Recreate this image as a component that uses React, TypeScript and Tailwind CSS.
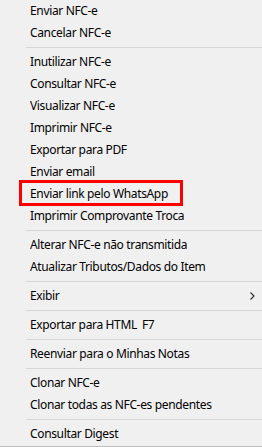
type Entry =
  | { kind: 'item'; label: string; shortcut?: string; submenu?: boolean; marked?: boolean }
  | { kind: 'sep' };

const entries: Entry[] = [
  { kind: 'item', label: 'Enviar NFC-e' },
  { kind: 'item', label: 'Cancelar NFC-e' },
  { kind: 'sep' },
  { kind: 'item', label: 'Inutilizar NFC-e' },
  { kind: 'item', label: 'Consultar NFC-e' },
  { kind: 'item', label: 'Visualizar NFC-e' },
  { kind: 'item', label: 'Imprimir NFC-e' },
  { kind: 'item', label: 'Exportar para PDF' },
  { kind: 'item', label: 'Enviar email' },
  { kind: 'item', label: 'Enviar link pelo WhatsApp', marked: true },
  { kind: 'item', label: 'Imprimir Comprovante Troca' },
  { kind: 'sep' },
  { kind: 'item', label: 'Alterar NFC-e não transmitida' },
  { kind: 'item', label: 'Atualizar Tributos/Dados do Item' },
  { kind: 'sep' },
  { kind: 'item', label: 'Exibir', submenu: true },
  { kind: 'sep' },
  { kind: 'item', label: 'Exportar para HTML', shortcut: 'F7' },
  { kind: 'sep' },
  { kind: 'item', label: 'Reenviar para o Minhas Notas' },
  { kind: 'sep' },
  { kind: 'item', label: 'Clonar NFC-e' },
  { kind: 'item', label: 'Clonar todas as NFC-es pendentes' },
  { kind: 'sep' },
  { kind: 'item', label: 'Consultar Digest' },
];

const Chevron = () => (
  <svg width="5" height="8" viewBox="0 0 5 8" className="shrink-0">
    <path d="M0.5 0.5 L4 4 L0.5 7.5" fill="none" stroke="#333" strokeWidth="1.2" />
  </svg>
);

export default function App() {
  return (
    <div
      className="w-[262px] h-[447px] bg-[#f0f0f0] border-b border-[#bdbdbd] text-[12px] tracking-[-0.35px] text-black overflow-hidden"
      style={{ fontFamily: '"Noto Sans", "Open Sans", sans-serif' }}
    >
      {entries.map((e, i) =>
        e.kind === 'sep' ? (
          <div key={i} className="h-[7px] pt-[3px] pl-[26px]">
            <div className="h-px bg-[#d7d7d7]" />
          </div>
        ) : (
          <div key={i} className="relative h-[22px] flex items-center pl-[30px] pr-[7px]">
            <span className="whitespace-pre">{e.label}</span>
            {e.shortcut && <span className="ml-[5px]">{e.shortcut}</span>}
            {e.submenu && (
              <span className="ml-auto flex items-center">
                <Chevron />
              </span>
            )}
            {e.marked && (
              <div className="absolute left-[19px] top-[-3px] w-[164px] h-[26px] border-[3px] border-[#ff0000]" />
            )}
          </div>
        )
      )}
    </div>
  );
}
